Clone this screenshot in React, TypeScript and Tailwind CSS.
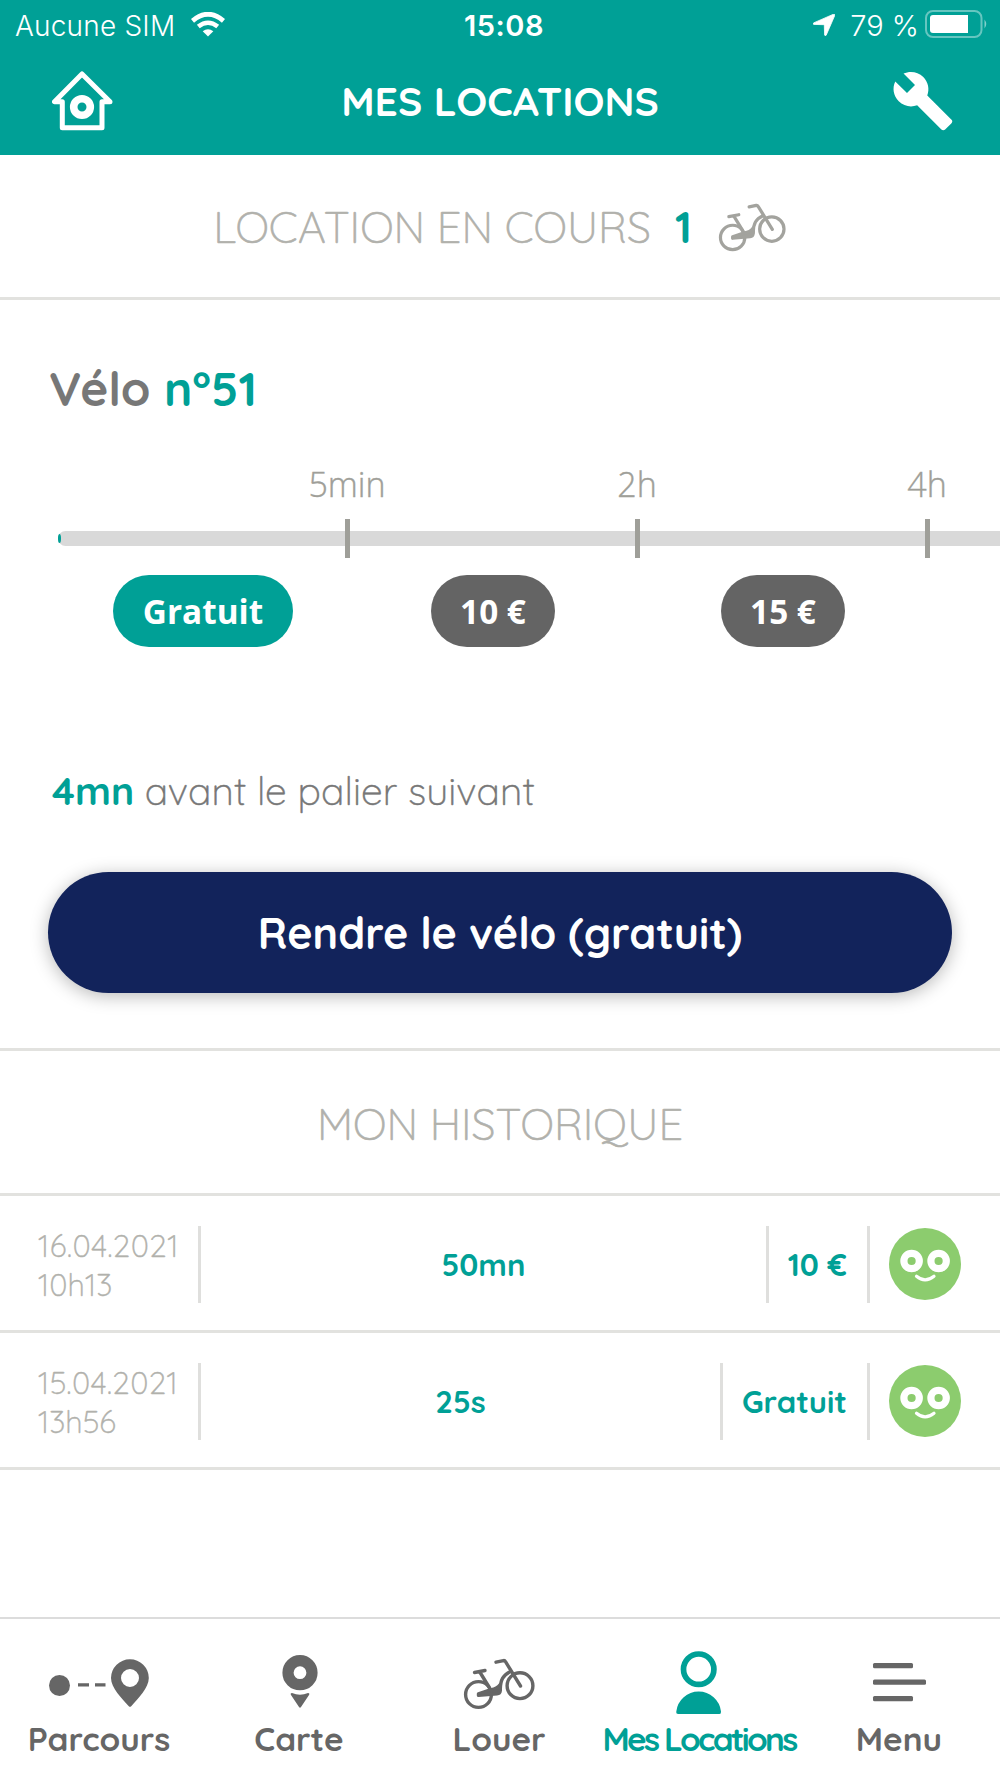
import type { ReactNode } from 'react';
import { MdBuild } from 'react-icons/md';

const STEPS = [
  { price: 'Gratuit', until: '5min', active: true },
  { price: '10 €', until: '2h', active: false },
  { price: '15 €', until: '4h', active: false },
];

const HISTORY = [
  { date: '16.04.2021', time: '10h13', duration: '50mn', price: '10 €' },
  { date: '15.04.2021', time: '13h56', duration: '25s', price: 'Gratuit' },
];

function BikeShape() {
  return (
    <g fill="none" stroke="currentColor" strokeWidth="3.4" strokeLinecap="round" strokeLinejoin="round">
      <circle cx="38.5" cy="43.5" r="12.9" />
      <circle cx="80" cy="34.7" r="12.9" />
      <path d="M34.5 21.5 45 19.5M39.8 21 49 36" />
      <path d="M56 11.2 63.5 9.6Q64.8 9.4 65.5 10.6L80.5 35" />
      <path d="M70.5 20.5C63 24 60.5 29 60.3 38" />
      <path d="M38.5 42.8 51 38.6Q57 38 60.3 33.5V39.5Q60 42.5 57 42.7L38.5 44.4Z" fill="currentColor" />
    </g>
  );
}

function Smiley() {
  return (
    <svg viewBox="0 0 72 72" className="w-[72px] h-[72px]" fill="none">
      <circle cx="36" cy="36" r="36" fill="#8ccc6e" />
      <g stroke="#fff">
        <circle cx="22.6" cy="33" r="7.7" strokeWidth="7.2" />
        <circle cx="49.6" cy="33" r="7.7" strokeWidth="7.2" />
        <path d="M27.5 48.3Q36 55.5 45 48.3" strokeWidth="3.2" strokeLinecap="round" />
      </g>
    </svg>
  );
}

function StatusBar() {
  return (
    <div className="flex h-[50px] items-center pt-px pl-[15px] pr-[11px] font-['Inter',sans-serif] text-[29px] leading-[50px]">
      <div className="flex flex-1 items-center">
        <span className="text-[28px] font-light tracking-[0.2px]">Aucune SIM</span>
        <svg viewBox="0 0 34 25" className="ml-[16px] mb-[3px] h-[25px] w-[34px]" fill="none" stroke="#fff">
          <path d="M1.5 8.8Q17-4.3 32.5 8.8" strokeWidth="4.800" />
          <path d="M7.3 14.6Q17 6.8 26.7 14.6" strokeWidth="4.500" />
          <path d="M11.7 19.3Q17 15 22.3 19.3L17 24.5Z" fill="#fff" stroke="none" />
        </svg>
      </div>
      <span className="ml-1 font-semibold tracking-[0.5px]">15:08</span>
      <div className="flex flex-1 items-center justify-end">
        <svg viewBox="0 0 22 22" className="mb-px h-[22px] w-[22px]" fill="#fff" stroke="#fff" strokeWidth=".8">
          <path d="M20.5.2Q22.3 0 21.7 1.6L13.2 21.2Q12.3 22.5 11.6 21L11.3 11.2Q11.2 10.7 10.7 10.7L.9 10.4Q-.6 9.900.6 8.900Z" />
        </svg>
        <span className="ml-[15px] font-light">79 %</span>
        <svg viewBox="0 0 64 28" className="ml-[6px] mb-[3px] h-7 w-16" fill="none">
          <rect x="1" y="1" width="55.5" height="26" rx="7" stroke="#fff" strokeOpacity=".4" strokeWidth="2" />
          <path d="M8 5H43V23H8Q5 23 5 20V8Q5 5 8 5Z" fill="#fff" />
          <path d="M59.5 9.5Q63 14 59.5 18.5Z" fill="#fff" fillOpacity=".5" />
        </svg>
      </div>
    </div>
  );
}

function Header() {
  return (
    <header className="h-[155px] bg-[#00a096] text-white">
      <StatusBar />
      <div className="flex h-[102px] items-center justify-between pl-[52px] pr-[45px]">
        <svg viewBox="0 0 61 60" className="h-[60px] w-[61px]" fill="none" stroke="#fff">
          <path
            d="M30 3 2.5 30.8H10.3V56.8H50V30.8H58L30 3Z"
            strokeWidth="5"
            strokeLinecap="round"
            strokeLinejoin="round"
          />
          <circle cx="30" cy="36" r="8.3" strokeWidth="7.6" />
        </svg>
        <h1 className="mr-1 text-[40.8px] font-bold leading-[50px]">MES LOCATIONS</h1>
        <MdBuild className="h-16 w-16" />
      </div>
    </header>
  );
}

function CurrentRental() {
  return (
    <section className="h-[751px] border-b-[3px] border-[#e2e2df] pt-[58px]">
      <h3 className="pl-[49px] text-[47.7px] font-bold leading-[60px] text-[#777]">
        Vélo <span className="text-[#00a096]">n°51</span>
      </h3>

      <div className="mt-[42px] overflow-hidden pl-[58px] font-['Open_Sans','Noto_Sans',sans-serif] text-[34px]">
        <div className="flex w-[1160px]">
          {STEPS.map((step) => (
            <div
              key={step.until}
              className="w-[290px] shrink-0 translate-x-[144px] text-center font-light leading-[48px] text-[#9f9f99] [-webkit-text-stroke:0.4px]"
            >
              {step.until}
            </div>
          ))}
        </div>
        <div className="mt-[11px] flex h-[39px] w-[1160px] items-center">
          <div className="relative flex h-[15px] w-full items-center overflow-visible rounded-full bg-[#d9d9d9]">
            <div className="absolute left-0 h-[9px] w-[3px] rounded-[50%] bg-[#00a096]" />
            {STEPS.map((step) => (
              <div key={step.until} className="flex w-[290px] shrink-0 justify-end">
                <div className="h-[39px] w-[5px] translate-x-[2px] bg-[#9f9f99]" />
              </div>
            ))}
          </div>
        </div>
        <div className="mt-[17px] flex w-[1160px]">
          {STEPS.map((step) => (
            <div key={step.price} className="flex w-[290px] shrink-0 justify-center">
              <span
                className={`rounded-full px-[29.5px] text-[33.3px] font-bold leading-[72px] text-white ${
                  step.active ? 'bg-[#00a096]' : 'bg-[#646464]'
                }`}
              >
                {step.price}
              </span>
            </div>
          ))}
        </div>
      </div>

      <p className="mt-[119px] pl-[52px] text-[39px] leading-[50px] text-[#777]">
        <span className="font-bold text-[#00a096]">4mn</span>{' '}
        <span className="font-light tracking-[0.1px] [-webkit-text-stroke:0.5px]">avant le palier suivant</span>
      </p>

      <button className="mx-12 mt-[56px] block h-[121px] w-[904px] rounded-full bg-[#12235b] pt-[2px] text-[43px] font-bold text-white shadow-[0_3px_18px_rgba(0,0,0,0.28)]">
        Rendre le vélo (gratuit)
      </button>
    </section>
  );
}

function History() {
  return (
    <section>
      <h2 className="h-[145px] border-b-[3px] border-[#e2e2df] text-center text-[43.5px] font-light leading-[146px] text-[#b1b1ac] [-webkit-text-stroke:0.6px]">
        MON HISTORIQUE
      </h2>
      {HISTORY.map((ride) => (
        <div
          key={ride.date}
          className="flex h-[137px] items-center border-b-[3px] border-[#e2e2df] pl-[38px] pr-[39px] pt-[3px] text-[31px]"
        >
          <div className="w-[160px] font-light leading-[39px] text-[#b1b1ac] [-webkit-text-stroke:0.4px]">
            <div className="tracking-[0.6px]">{ride.date}</div>
            <div>{ride.time}</div>
          </div>
          <div className="h-[77px] w-[3px] bg-[#dfdfdd]" />
          <div className="flex-1 pt-[2px] text-center font-bold text-[#00a096]">{ride.duration}</div>
          <div className="flex h-[77px] items-center border-x-[3px] border-[#dfdfdd] pt-[2px] pl-[19px] pr-5 font-bold text-[#00a096]">
            {ride.price}
          </div>
          <div className="mb-[2px] ml-[19px]">
            <Smiley />
          </div>
        </div>
      ))}
    </section>
  );
}

function NavItem({ label, className = 'text-[#666]', children }: { label: ReactNode; className?: string; children: ReactNode }) {
  return (
    <a className={`flex w-[200px] flex-col items-center pt-8 text-[33.3px] font-bold leading-[40px] ${className}`}>
      <svg viewBox="0 0 120 65" className="mb-[3px] h-[65px] w-[120px]" fill="currentColor">
        {children}
      </svg>
      <span className="mr-[2px] whitespace-nowrap">{label}</span>
    </a>
  );
}

function TabBar() {
  return (
    <nav className="flex h-[161px] border-t-2 border-[#dcdcdc]">
      <NavItem label="Parcours">
        <circle cx="19.5" cy="34.5" r="10.5" />
        <path d="M38 32.3H49V35.5H38ZM55 32.3H65.5V35.5H55Z" />
        <path
          fillRule="evenodd"
          d="M90 8.3A18.8 18.8 0 0 0 71 27C71 37 82 47.5 88.8 55.2Q90 56.5 91.2 55.2C98 47.5 108.8 37 108.8 27A18.8 18.8 0 0 0 90 8.3ZM90 18A9 9 0 1 1 90 36A9 9 0 0 1 90 18Z"
        />
      </NavItem>
      <NavItem label="Carte">
        <circle cx="60" cy="21.7" r="12" fill="none" stroke="currentColor" strokeWidth="11.2" />
        <path d="M52 42Q60 45.5 68 42Q70 42 69 44L61 56Q60 57.5 59 56L51 44Q50 42 52 42Z" />
      </NavItem>
      <NavItem label="Louer">
        <BikeShape />
      </NavItem>
      <NavItem label="Mes Locations" className="text-[#00a096] tracking-[-2.7px]">
        <circle cx="58.7" cy="18.2" r="15.2" fill="none" stroke="currentColor" strokeWidth="5.7" />
        <path d="M38.2 63Q36 63 36.3 60.5A22.5 22.5 0 0 1 81 60.5Q81.2 63 79.5 63Z" />
      </NavItem>
      <NavItem label="Menu">
        <rect x="33" y="12" width="40" height="5.3" rx="1.5" />
        <rect x="33" y="28.5" width="53" height="5.3" rx="1.5" />
        <rect x="33" y="45" width="40" height="5.3" rx="1.5" />
      </NavItem>
    </nav>
  );
}

export default function App() {
  return (
    <div className="flex h-[1778px] w-[1000px] flex-col overflow-hidden bg-white font-['Quicksand','Lato',sans-serif]">
      <Header />
      <div className="flex h-[145px] items-center justify-center border-b-[3px] border-[#e2e2df] pt-[2px] text-[43.5px] text-[#b1b1ac]">
        <h2 className="font-light [-webkit-text-stroke:0.6px]">LOCATION EN COURS</h2>
        <span className="ml-6 font-bold text-[#00a096]">1</span>
        <svg viewBox="22 6 74 54" className="ml-[25px] h-[51px] w-[70px] text-[#a3a39e]">
          <BikeShape />
        </svg>
      </div>
      <main className="flex-1">
        <CurrentRental />
        <History />
      </main>
      <TabBar />
    </div>
  );
}
